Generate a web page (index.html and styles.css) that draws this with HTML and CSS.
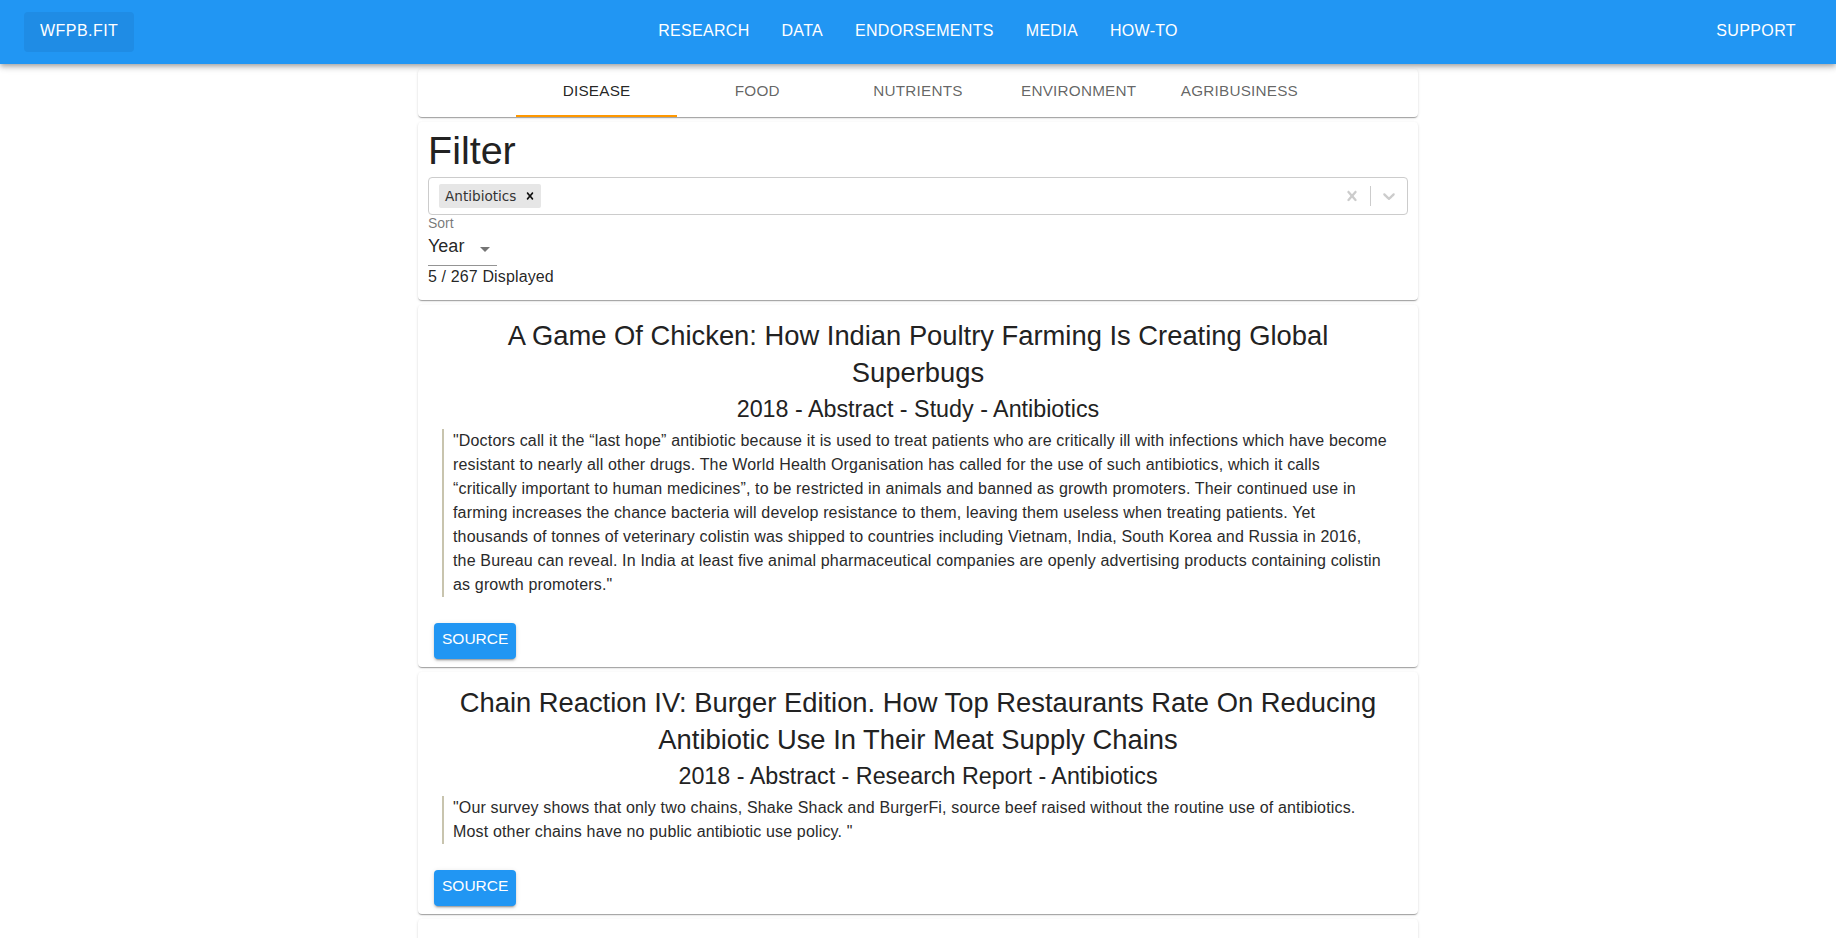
FILE: index.html
```html
<!DOCTYPE html>
<html lang="en">
<head>
<meta charset="utf-8">
<title>WFPB.FIT</title>
<link rel="stylesheet" href="styles.css">
</head>
<body>
<header class="appbar">
  <div class="toolbar">
    <a class="logo" href="#">WFPB.FIT</a>
    <nav class="nav">
      <a class="nav-link" href="#">RESEARCH</a>
      <a class="nav-link" href="#">DATA</a>
      <a class="nav-link" href="#">ENDORSEMENTS</a>
      <a class="nav-link" href="#">MEDIA</a>
      <a class="nav-link" href="#">HOW-TO</a>
    </nav>
    <a class="nav-link support" href="#">SUPPORT</a>
  </div>
</header>

<main class="container">
  <div class="card tabs">
    <div class="tab active">DISEASE</div>
    <div class="tab">FOOD</div>
    <div class="tab">NUTRIENTS</div>
    <div class="tab">ENVIRONMENT</div>
    <div class="tab">AGRIBUSINESS</div>
  </div>

  <section class="card filter">
    <h2 class="filter-title">Filter</h2>
    <div class="select-control">
      <div class="value-container">
        <div class="chip">
          <span class="chip-label">Antibiotics</span>
          <span class="chip-remove">
            <svg viewBox="0 0 20 20" width="14" height="14"><path d="M14.348 14.849c-0.469 0.469-1.229 0.469-1.697 0l-2.651-3.030-2.651 3.029c-0.469 0.469-1.229 0.469-1.697 0-0.469-0.469-0.469-1.229 0-1.697l2.758-3.15-2.759-3.152c-0.469-0.469-0.469-1.228 0-1.697s1.228-0.469 1.697 0l2.652 3.031 2.651-3.031c0.469-0.469 1.228-0.469 1.697 0s0.469 1.229 0 1.697l-2.758 3.152 2.758 3.15c0.469 0.469 0.469 1.229 0 1.698z"/></svg>
          </span>
        </div>
      </div>
      <div class="indicators">
        <span class="indicator">
          <svg viewBox="0 0 20 20" width="20" height="20"><path d="M14.348 14.849c-0.469 0.469-1.229 0.469-1.697 0l-2.651-3.030-2.651 3.029c-0.469 0.469-1.229 0.469-1.697 0-0.469-0.469-0.469-1.229 0-1.697l2.758-3.15-2.759-3.152c-0.469-0.469-0.469-1.228 0-1.697s1.228-0.469 1.697 0l2.652 3.031 2.651-3.031c0.469-0.469 1.228-0.469 1.697 0s0.469 1.229 0 1.697l-2.758 3.152 2.758 3.15c0.469 0.469 0.469 1.229 0 1.698z"/></svg>
        </span>
        <span class="separator"></span>
        <span class="indicator">
          <svg viewBox="0 0 20 20" width="20" height="20"><path d="M4.516 7.548c0.436-0.446 1.043-0.481 1.576 0l3.908 3.747 3.908-3.747c0.533-0.481 1.141-0.446 1.574 0 0.436 0.445 0.408 1.197 0 1.615-0.406 0.418-4.695 4.502-4.695 4.502-0.217 0.223-0.502 0.335-0.787 0.335s-0.57-0.112-0.789-0.335c0 0-4.287-4.084-4.695-4.502s-0.436-1.170 0-1.615z"/></svg>
        </span>
      </div>
    </div>
    <div class="sort-label">Sort</div>
    <div class="sort-select">
      <span>Year</span>
      <svg class="sort-arrow" viewBox="0 0 24 24" width="24" height="24"><path d="M7 10l5 5 5-5z"/></svg>
    </div>
    <p class="count">5 / 267 Displayed</p>
  </section>

  <article class="card entry">
    <h3 class="entry-title">A Game Of Chicken: How Indian Poultry Farming Is Creating Global Superbugs</h3>
    <div class="entry-meta">2018 - Abstract - Study - Antibiotics</div>
    <blockquote class="entry-quote">"Doctors call it the “last hope” antibiotic because it is used to treat patients who are critically ill with infections which have become<br>
resistant to nearly all other drugs. The World Health Organisation has called for the use of such antibiotics, which it calls<br>
“critically important to human medicines”, to be restricted in animals and banned as growth promoters. Their continued use in<br>
farming increases the chance bacteria will develop resistance to them, leaving them useless when treating patients. Yet<br>
thousands of tonnes of veterinary colistin was shipped to countries including Vietnam, India, South Korea and Russia in 2016,<br>
the Bureau can reveal. In India at least five animal pharmaceutical companies are openly advertising products containing colistin<br>
as growth promoters."</blockquote>
    <a class="source-btn" href="#">SOURCE</a>
  </article>

  <article class="card entry">
    <h3 class="entry-title">Chain Reaction IV: Burger Edition. How Top Restaurants Rate On Reducing Antibiotic Use In Their Meat Supply Chains</h3>
    <div class="entry-meta">2018 - Abstract - Research Report - Antibiotics</div>
    <blockquote class="entry-quote">"Our survey shows that only two chains, Shake Shack and BurgerFi, source beef raised without the routine use of antibiotics.<br>
Most other chains have no public antibiotic use policy. "</blockquote>
    <a class="source-btn" href="#">SOURCE</a>
  </article>

  <article class="card entry placeholder"></article>
</main>
</body>
</html>
```

FILE: styles.css
```css
* { box-sizing: border-box; }

html, body {
  margin: 0;
  padding: 0;
  background: #fff;
  font-family: "Liberation Sans", Arial, Helvetica, sans-serif;
  color: rgba(0, 0, 0, 0.87);
}

a { text-decoration: none; color: inherit; }

/* ---------- App bar ---------- */
.appbar {
  position: relative;
  z-index: 2;
  background: #2196f3;
  color: #fff;
  box-shadow: 0 2px 4px -1px rgba(0,0,0,.2), 0 4px 5px 0 rgba(0,0,0,.14), 0 1px 10px 0 rgba(0,0,0,.12);
}

.toolbar {
  height: 64px;
  padding: 0 24px;
  display: grid;
  grid-template-columns: 1fr auto 1fr;
  align-items: center;
}

.logo,
.nav-link {
  display: inline-block;
  height: 40px;
  padding: 5px 16px 8px;
  font-size: 16px;
  line-height: 27px;
  letter-spacing: 0.3px;
  color: #fff;
  border-radius: 4px;
}

.logo {
  justify-self: start;
  letter-spacing: 0.46px;
  background: rgb(31, 140, 229);
}

.nav {
  display: flex;
}

.support {
  justify-self: end;
  letter-spacing: 0.4px;
}

/* ---------- Container ---------- */
.container {
  width: 1000px;
  margin: 0 auto;
  padding-top: 5px;
}

.card {
  background: #fff;
  border-radius: 4px;
  margin-bottom: 5px;
  box-shadow: 0 2px 1px -1px rgba(0,0,0,.2), 0 1px 1px 0 rgba(0,0,0,.14), 0 1px 3px 0 rgba(0,0,0,.12);
}

/* ---------- Tabs ---------- */
.tabs {
  display: flex;
  justify-content: center;
  height: 48px;
}

.tab {
  position: relative;
  width: 160.7px;
  display: flex;
  align-items: center;
  justify-content: center;
  padding-bottom: 5px;
  font-size: 15.3px;
  letter-spacing: 0.2px;
  color: rgba(0, 0, 0, 0.62);
}

.tab.active {
  color: rgba(0, 0, 0, 0.87);
}

.tab.active::after {
  content: "";
  position: absolute;
  left: 0;
  right: 0;
  bottom: 0;
  height: 2px;
  background: #ff9800;
}

/* ---------- Filter ---------- */
.filter {
  padding: 4px 10px 14px;
}

.filter-title {
  margin: 0 0 3px;
  font-size: 39.5px;
  line-height: 48px;
  font-weight: 400;
  color: #222;
}

.select-control {
  display: flex;
  align-items: center;
  height: 38px;
  border: 1px solid #ccc;
  border-radius: 4px;
}

.value-container {
  flex: 1;
  display: flex;
  align-items: center;
  padding: 2px 8px;
}

.chip {
  display: flex;
  margin: 2px;
  background: #e6e6e6;
  border-radius: 2px;
}

.chip-label {
  font-family: "DejaVu Sans", sans-serif;
  font-size: 13.6px;
  line-height: 18.7px;
  padding: 3px 3px 3px 6px;
  color: #333;
}

.chip-remove {
  display: flex;
  align-items: center;
  padding: 0 4px;
  fill: #111;
}

.indicators {
  display: flex;
  align-self: stretch;
  align-items: center;
}

.indicator {
  display: flex;
  padding: 8px;
  fill: #ccc;
}

.separator {
  align-self: stretch;
  width: 1px;
  margin: 8px 0;
  background: #ccc;
}

.sort-label {
  font-size: 14px;
  line-height: 16px;
  color: rgba(0, 0, 0, 0.54);
}

.sort-select {
  position: relative;
  width: 69px;
  padding: 5px 24px 8px 0;
  font-size: 18px;
  line-height: 21px;
  border-bottom: 1px solid rgba(0, 0, 0, 0.42);
}

.sort-arrow {
  position: absolute;
  right: 0;
  top: 6px;
  fill: rgba(0, 0, 0, 0.54);
}

.count {
  margin: 1px 0 0;
  font-size: 16px;
  line-height: 19.2px;
  letter-spacing: 0.13px;
}

/* ---------- Entries ---------- */
.entry {
  padding: 12px 10px 8px;
}

.entry-title {
  margin: 0;
  padding: 0 16px;
  font-size: 27.35px;
  line-height: 37px;
  font-weight: 400;
  text-align: center;
  color: #222;
}

.entry-meta {
  margin-top: 2px;
  font-size: 23.3px;
  line-height: 32px;
  text-align: center;
  color: #222;
}

.entry-quote {
  margin: 4px 14px 0;
  padding: 0 0 0 9px;
  border-left: 2px solid #c8c4ae;
  font-size: 16px;
  line-height: 24px;
  letter-spacing: 0.16px;
  color: #2a2a2a;
}

.source-btn {
  display: inline-block;
  margin: 26px 0 0 6px;
  height: 36px;
  padding: 0 8px;
  font-size: 15.5px;
  line-height: 32.4px;
  color: #fff;
  background: #2196f3;
  border-radius: 4px;
  box-shadow: 0 3px 1px -2px rgba(0,0,0,.2), 0 2px 2px 0 rgba(0,0,0,.14), 0 1px 5px 0 rgba(0,0,0,.12);
}

.placeholder {
  min-height: 200px;
}
```
